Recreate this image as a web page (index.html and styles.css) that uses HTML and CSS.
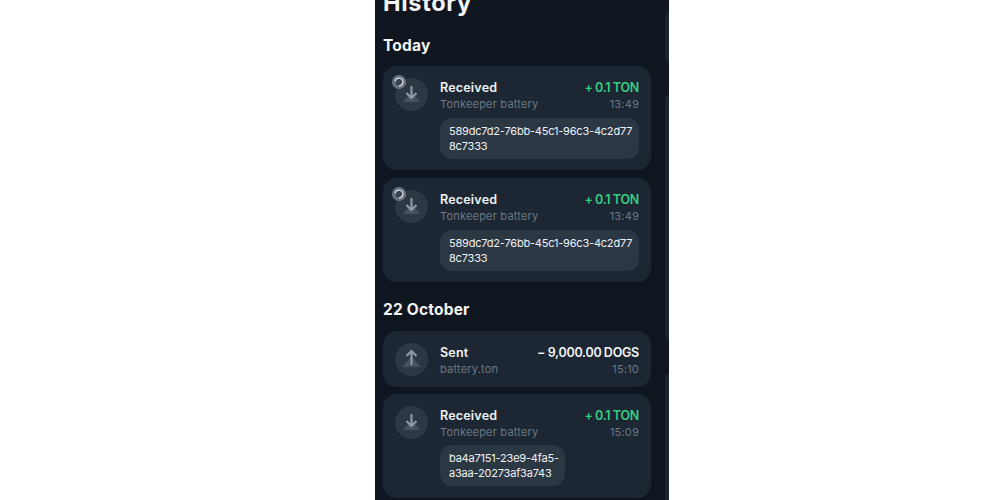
FILE: index.html
```html
<!DOCTYPE html>
<html lang="en">
<head>
<meta charset="utf-8">
<title>History</title>
<link rel="stylesheet" href="styles.css">
</head>
<body>
<main class="phone">
  <div class="content">
    <h1 class="title">History</h1>
    <h2 class="section first">Today</h2>
    <article class="card">
      <div class="icon">
        <svg class="glyph" viewBox="0 0 33 33"><path class="fill" d="M16.5 14 L25 24 H8 Z"/><path class="stroke" d="M16.5 8V20M11.5 15l5 5 5-5"/></svg>
        <svg class="pending" viewBox="0 0 14 14"><circle class="pending-bg" cx="7" cy="7" r="7"/><circle class="pending-core" cx="7" cy="7" r="3.6"/><circle class="pending-ring" cx="7" cy="7" r="3.9" pathLength="100" stroke-dasharray="72 28" transform="rotate(190 7 7)"/></svg>
      </div>
      <div class="body">
        <div class="row"><span class="name">Received</span><span class="amount plus">+ 0.1 TON</span></div>
        <div class="row sub"><span>Tonkeeper battery</span><span>13:49</span></div>
        <div class="comment">589dc7d2-76bb-45c1-96c3-4c2d77<br>8c7333</div>
      </div>
    </article>
    <article class="card">
      <div class="icon">
        <svg class="glyph" viewBox="0 0 33 33"><path class="fill" d="M16.5 14 L25 24 H8 Z"/><path class="stroke" d="M16.5 8V20M11.5 15l5 5 5-5"/></svg>
        <svg class="pending" viewBox="0 0 14 14"><circle class="pending-bg" cx="7" cy="7" r="7"/><circle class="pending-core" cx="7" cy="7" r="3.6"/><circle class="pending-ring" cx="7" cy="7" r="3.9" pathLength="100" stroke-dasharray="72 28" transform="rotate(190 7 7)"/></svg>
      </div>
      <div class="body">
        <div class="row"><span class="name">Received</span><span class="amount plus">+ 0.1 TON</span></div>
        <div class="row sub"><span>Tonkeeper battery</span><span>13:49</span></div>
        <div class="comment">589dc7d2-76bb-45c1-96c3-4c2d77<br>8c7333</div>
      </div>
    </article>
    <h2 class="section later">22 October</h2>
    <article class="card short">
      <div class="icon">
        <svg class="glyph" viewBox="0 0 33 33"><path class="fill" d="M16.5 13 L25.5 24 H7.5 Z"/><path class="stroke" d="M16.5 22V8M11.5 13l5-5 5 5"/></svg>
      </div>
      <div class="body">
        <div class="row"><span class="name">Sent</span><span class="amount">− 9,000.00 DOGS</span></div>
        <div class="row sub"><span>battery.ton</span><span>15:10</span></div>
      </div>
    </article>
    <article class="card">
      <div class="icon">
        <svg class="glyph" viewBox="0 0 33 33"><path class="fill" d="M16.5 14 L25 24 H8 Z"/><path class="stroke" d="M16.5 8V20M11.5 15l5 5 5-5"/></svg>
      </div>
      <div class="body">
        <div class="row"><span class="name">Received</span><span class="amount plus">+ 0.1 TON</span></div>
        <div class="row sub"><span>Tonkeeper battery</span><span>15:09</span></div>
        <div class="comment narrow">ba4a7151-23e9-4fa5-<br>a3aa-20273af3a743</div>
      </div>
    </article>
  </div>
  <div class="peek">
    <div class="peek-card one"></div>
    <div class="peek-card two"></div>
    <div class="peek-card three"></div>
  </div>
</main>
</body>
</html>
```
FILE: styles.css
```css
* { box-sizing: border-box; }
html, body { margin: 0; height: 100%; background: #fff; overflow: hidden; }
body { padding-left: 375px; font-family: "Inter", "Liberation Sans", sans-serif; }
.phone { width: 294px; height: 500px; background: #10161f; display: flex; overflow: hidden; color: #f2f4f6; }
.content { width: 276px; flex: none; padding-left: 8px; }
.title { margin: -11px 0 0; font-size: 23.5px; line-height: 28px; font-weight: 700; letter-spacing: 0.7px; }
.section { margin: 0; font-size: 15.5px; line-height: 20px; font-weight: 700; letter-spacing: 0.2px; height: 22px; }
.section.first { margin-top: 19px; margin-bottom: 8px; }
.section.later { margin-top: 18px; margin-bottom: 9px; }
.card { width: 268px; min-height: 104px; background: #1c2733; border-radius: 14px; padding: 12px 12px 11px; display: flex; gap: 12px; margin-bottom: 8px; }
.card.short { min-height: 56px; padding-bottom: 9px; margin-bottom: 7px; }
.icon { width: 33px; height: 33px; border-radius: 50%; background: #2c3844; flex: none; position: relative; }
.glyph { display: block; width: 33px; height: 33px; }
.fill { fill: #46525e; }
.stroke { fill: none; stroke: #8f98a2; stroke-width: 2.2; }
.pending { position: absolute; left: -3px; top: -3px; width: 14px; height: 14px; }
.pending-bg { fill: #6a7480; }
.pending-core { fill: #37434f; }
.pending-ring { fill: none; stroke: #d6dbdf; stroke-width: 1.4; }
.body { flex: 1; min-width: 0; margin-top: 1px; }
.row { display: flex; justify-content: space-between; font-size: 12.5px; line-height: 17px; }
.name { font-weight: 600; letter-spacing: 0.2px; }
.amount { font-weight: 600; letter-spacing: -0.25px; word-spacing: -0.5px; }
.plus { color: #39cc83; }
.sub { font-size: 11px; color: #6d7885; line-height: 17px; letter-spacing: 0.2px; }
.comment { margin-top: 5px; width: 199px; height: 41px; background: #2c3744; border-radius: 12px; padding: 6px 9px 5px; font-size: 11px; line-height: 15px; letter-spacing: -0.2px; color: #eef1f4; white-space: nowrap; }
.comment.narrow { width: 125px; margin-top: 4px; }
.peek { flex: 1; display: flex; flex-direction: column; padding: 12px 0 0 14px; }
.peek-card { background: #1a2330; border-radius: 6px 0 0 6px; width: 4px; flex: none; }
.one { height: 50px; }
.two { height: 245px; margin-top: 33px; }
.three { height: 130px; margin-top: 33px; }
```
